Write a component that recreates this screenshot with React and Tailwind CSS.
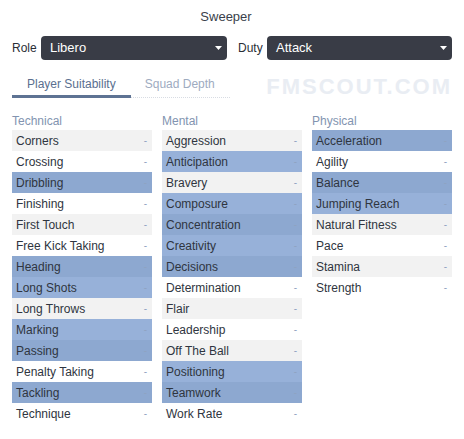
const COLUMNS = [
  {
    title: 'Technical',
    rows: [
      ['Corners', 0], ['Crossing', 0], ['Dribbling', 1], ['Finishing', 0], ['First Touch', 0],
      ['Free Kick Taking', 0], ['Heading', 1], ['Long Shots', 1], ['Long Throws', 0], ['Marking', 1],
      ['Passing', 1], ['Penalty Taking', 0], ['Tackling', 1], ['Technique', 0],
    ],
  },
  {
    title: 'Mental',
    rows: [
      ['Aggression', 0], ['Anticipation', 1], ['Bravery', 0], ['Composure', 1], ['Concentration', 1],
      ['Creativity', 1], ['Decisions', 1], ['Determination', 0], ['Flair', 0], ['Leadership', 0],
      ['Off The Ball', 0], ['Positioning', 1], ['Teamwork', 1], ['Work Rate', 0],
    ],
  },
  {
    title: 'Physical',
    rows: [
      ['Acceleration', 1], ['Agility', 0], ['Balance', 1], ['Jumping Reach', 1],
      ['Natural Fitness', 0], ['Pace', 0], ['Stamina', 0], ['Strength', 0],
    ],
  },
]

function rowClass(i, hl) {
  if (hl) return i % 2 === 0 ? 'bg-[#8da8d0]' : 'bg-[#97b1d9]'
  return i % 2 === 0 ? 'bg-[#f2f2f2]' : 'bg-white'
}

function Select({ value, className }) {
  return (
    <div className={`h-6 rounded-[4px] bg-[#393c46] flex items-center pl-[9px] pr-[5px] ${className}`}>
      <span className="flex-1 text-[13px] text-white">{value}</span>
      <svg width="7" height="4" viewBox="0 0 7 4"><path d="M0 0h7L3.5 4z" fill="#fff" /></svg>
    </div>
  )
}

export default function App() {
  return (
    <div className="w-[464px] h-[439px] bg-white px-3 font-['Liberation_Sans',Arial,sans-serif] text-[#2f3540]">
      <h1 className="pt-[9px] pr-3 text-center text-[13px] leading-4 text-[#3a3f4b]">Sweeper</h1>

      {/* role / duty */}
      <div className="mt-[11px] flex items-center">
        <span className="w-[22px] text-[12px] text-[#2a2e36]">Role</span>
        <Select value="Libero" className="ml-[7px] w-[186px]" />
        <span className="ml-[11px] w-[22px] text-[12px] text-[#2a2e36]">Duty</span>
        <Select value="Attack" className="ml-[7px] flex-1" />
      </div>

      {/* tabs */}
      <div className="mt-4 flex items-end">
        <div className="flex w-[218px] border-b border-dotted border-[#d8dce3]">
          <div className="px-[15px] pb-[3px] text-[12px] leading-4 text-[#5a6f8f] border-b-[3px] border-[#5e7393] -mb-px">Player Suitability</div>
          <div className="px-[14px] pb-[3px] text-[12px] leading-4 text-[#9eabbf]">Squad Depth</div>
        </div>
        <div className="ml-auto mb-[1px] text-[22px] leading-[20px] font-bold tracking-[2px] text-[#e9edf3]">FMSCOUT.COM</div>
      </div>

      {/* attribute columns */}
      <div className="mt-[15px] grid grid-cols-3 gap-[10px]">
        {COLUMNS.map(col => (
          <div key={col.title}>
            <div className="text-[12px] leading-4 text-[#8294b0] mb-px">{col.title}</div>
            {col.rows.map(([name, hl], i) => (
              <div key={name} className={`h-[21px] flex items-center pl-1 pr-[5px] ${rowClass(i, hl)}`}>
                <span className="flex-1 text-[12px]">{name}</span>
                <span className="text-[10px] text-[#8fa3c2]">-</span>
              </div>
            ))}
          </div>
        ))}
      </div>
    </div>
  )
}
